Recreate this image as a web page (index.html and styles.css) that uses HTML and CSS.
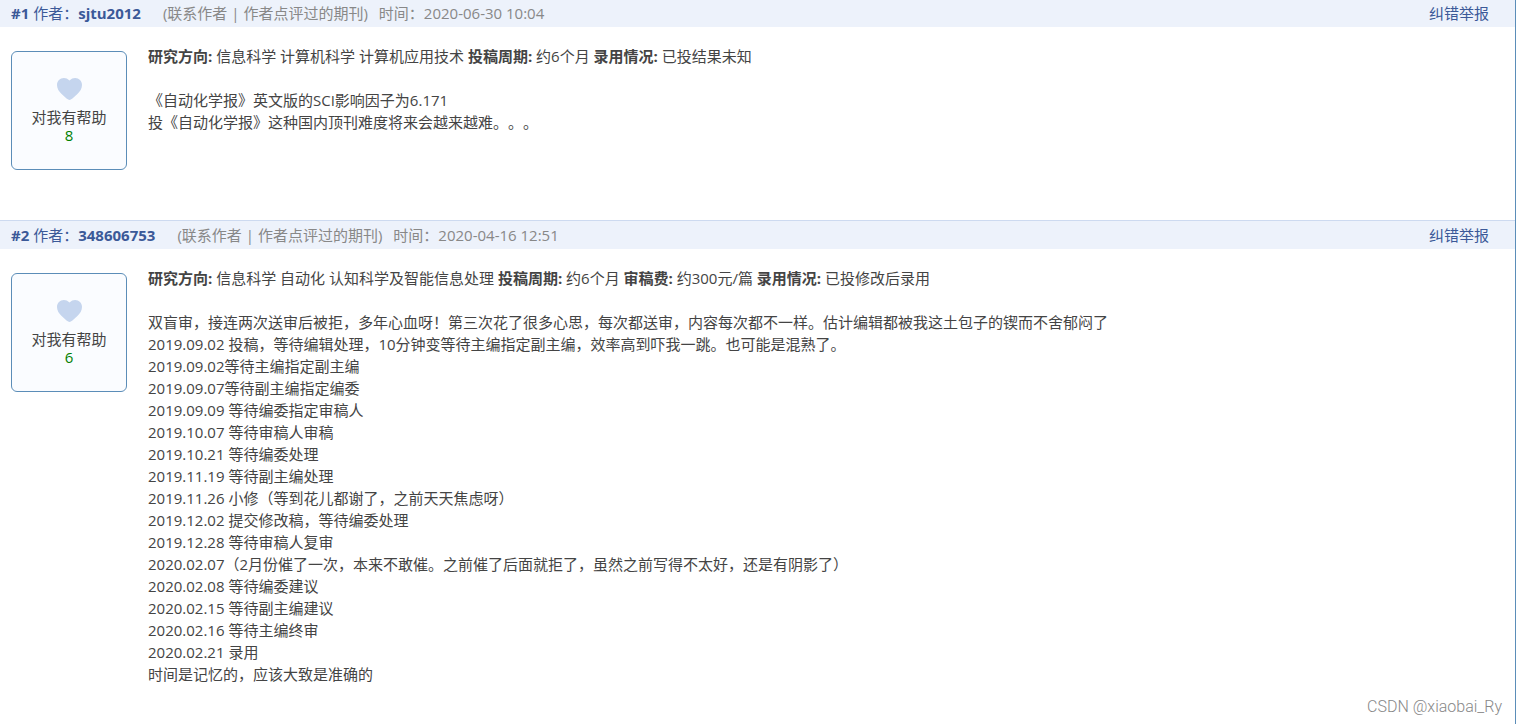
FILE: index.html
```html
<!DOCTYPE html>
<html lang="zh-CN">
<head>
    <meta charset="UTF-8">
    <meta name="viewport" content="width=device-width, initial-scale=1.0">
    <title>自动化学报 点评</title>
    <link rel="stylesheet" href="styles.css">
</head>
<body>
    <div class="comments">
        <div class="comment">
            <div class="comment-head">
                <span class="author"><b>#1</b> 作者：<a href="#"><b>sjtu2012</b></a></span>
                <span class="links">(<a href="#">联系作者</a> | <a href="#">作者点评过的期刊</a>)</span>
                <span class="time">时间：2020-06-30 10:04</span>
                <a class="report" href="#">纠错举报</a>
            </div>
            <div class="comment-body">
                <button type="button" class="helpful">
                    <svg class="heart" viewBox="0 0 25 22" aria-hidden="true"><path d="M12.5 2.6C10.8.8 8.900 0 6.900 0 3 0 0 3 0 7c0 3.600 2 6.500 4.600 9.100 2.200 2.200 4.400 4.200 6.600 5.500.8.5 1.800.5 2.600 0 2.200-1.300 4.400-3.300 6.600-5.500C23 13.500 25 10.600 25 7c0-4-3-7-6.900-7-2 0-3.900.8-5.600 2.600z"/></svg>
                    <span>对我有帮助</span>
                    <span class="count">8</span>
                </button>
                <div class="content">
                    <p><b>研究方向:</b> 信息科学 计算机科学 计算机应用技术 <b>投稿周期:</b> 约6个月 <b>录用情况:</b> 已投结果未知</p>
                    <p>
                        《自动化学报》英文版的SCI影响因子为6.171<br>
                        投《自动化学报》这种国内顶刊难度将来会越来越难。。。
                    </p>
                </div>
            </div>
        </div>

        <div class="comment">
            <div class="comment-head">
                <span class="author"><b>#2</b> 作者：<a href="#"><b>348606753</b></a></span>
                <span class="links">(<a href="#">联系作者</a> | <a href="#">作者点评过的期刊</a>)</span>
                <span class="time">时间：2020-04-16 12:51</span>
                <a class="report" href="#">纠错举报</a>
            </div>
            <div class="comment-body">
                <button type="button" class="helpful">
                    <svg class="heart" viewBox="0 0 25 22" aria-hidden="true"><path d="M12.5 2.6C10.8.8 8.900 0 6.900 0 3 0 0 3 0 7c0 3.600 2 6.500 4.600 9.100 2.200 2.200 4.400 4.200 6.600 5.500.8.5 1.800.5 2.600 0 2.200-1.300 4.400-3.300 6.600-5.500C23 13.500 25 10.600 25 7c0-4-3-7-6.900-7-2 0-3.900.8-5.600 2.600z"/></svg>
                    <span>对我有帮助</span>
                    <span class="count">6</span>
                </button>
                <div class="content">
                    <p><b>研究方向:</b> 信息科学 自动化 认知科学及智能信息处理 <b>投稿周期:</b> 约6个月 <b>审稿费:</b> 约300元/篇 <b>录用情况:</b> 已投修改后录用</p>
                    <p>
                        双盲审，接连两次送审后被拒，多年心血呀！第三次花了很多心思，每次都送审，内容每次都不一样。估计编辑都被我这土包子的锲而不舍郁闷了<br>
                        2019.09.02 投稿，等待编辑处理，10分钟变等待主编指定副主编，效率高到吓我一跳。也可能是混熟了。<br>
                        2019.09.02等待主编指定副主编<br>
                        2019.09.07等待副主编指定编委<br>
                        2019.09.09 等待编委指定审稿人<br>
                        2019.10.07 等待审稿人审稿<br>
                        2019.10.21 等待编委处理<br>
                        2019.11.19 等待副主编处理<br>
                        2019.11.26 小修（等到花儿都谢了，之前天天焦虑呀）<br>
                        2019.12.02 提交修改稿，等待编委处理<br>
                        2019.12.28 等待审稿人复审<br>
                        2020.02.07（2月份催了一次，本来不敢催。之前催了后面就拒了，虽然之前写得不太好，还是有阴影了）<br>
                        2020.02.08 等待编委建议<br>
                        2020.02.15 等待副主编建议<br>
                        2020.02.16 等待主编终审<br>
                        2020.02.21 录用<br>
                        时间是记忆的，应该大致是准确的
                    </p>
                </div>
            </div>
        </div>
    </div>
    <div class="watermark">CSDN @xiaobai_Ry</div>
</body>
</html>
```
FILE: styles.css
```css
body {
    margin: 0;
    font-family: "Open Sans", "Noto Sans CJK SC", sans-serif;
    font-size: 15px;
    line-height: 22px;
    text-spacing-trim: space-all;
    color: #444;
    background-color: #fff;
}

a {
    color: inherit;
    text-decoration: none;
}

p {
    margin: 0 0 22px;
}

p:last-child {
    margin-bottom: 0;
}

.comments {
    box-sizing: border-box;
    min-height: 100vh;
    margin-right: 1px;
    border-right: 1px solid #5b8db8;
}

.comment + .comment {
    margin-top: 50px;
}

.comment-head {
    display: flex;
    padding: 2px 26px 3px 11px;
    background-color: #edf2fb;
    color: #888;
}

.comment + .comment .comment-head {
    padding-top: 3px;
    border-top: 1px solid #cddaf0;
}

.author, .report {
    color: #3b5998;
}

.links {
    margin-left: 22px;
}

.time {
    margin-left: 11px;
}

.report {
    margin-left: auto;
}

.comment-body {
    display: flex;
    align-items: flex-start;
    gap: 21px;
    padding: 24px 11px 0;
}

.helpful {
    display: flex;
    flex-direction: column;
    align-items: center;
    flex-shrink: 0;
    box-sizing: border-box;
    width: 116px;
    height: 119px;
    padding: 26px 0 0;
    border: 1px solid #5b8db8;
    border-radius: 6px;
    background-color: #fafcff;
    color: #444;
    font: inherit;
    line-height: 18px;
    cursor: pointer;
}

.heart {
    width: 25px;
    height: 22px;
    margin-bottom: 8px;
    fill: #c5d5ee;
}

.count {
    color: green;
}

.content {
    margin-top: -6px;
}

.watermark {
    position: absolute;
    right: 15px;
    bottom: 6px;
    font-family: Roboto, sans-serif;
    font-size: 16px;
    font-weight: 300;
    color: #888;
}
```
